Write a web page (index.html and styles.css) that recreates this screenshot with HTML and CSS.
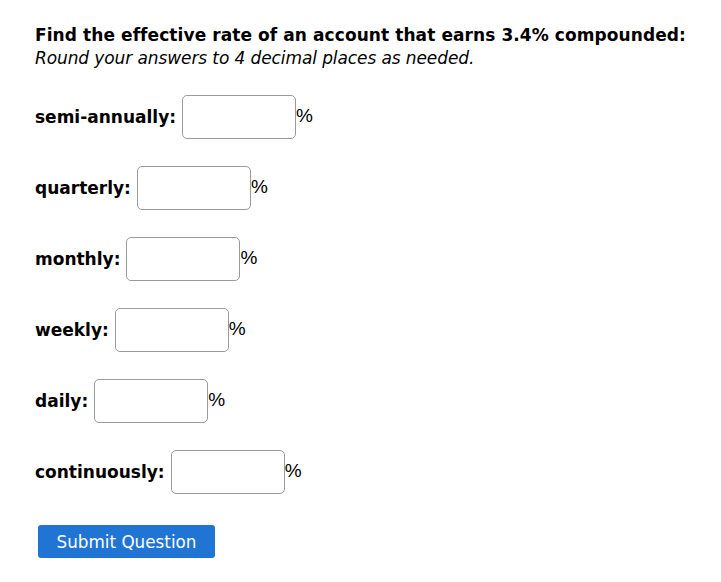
FILE: index.html
```html
<!DOCTYPE html>
<html>
<head>
<meta charset="utf-8">
<link rel="stylesheet" href="styles.css">
</head>
<body>
<div class="question">
  <p class="prompt"><strong class="title">Find the effective rate of an account that earns 3.4% compounded:</strong><br><em class="note">Round your answers to 4 decimal places as needed.</em></p>
  <div class="answers">
    <div class="row"><span class="label">semi-annually:</span><input class="box" type="text"><span class="pct">%</span></div>
    <div class="row"><span class="label">quarterly:</span><input class="box" type="text"><span class="pct">%</span></div>
    <div class="row"><span class="label">monthly:</span><input class="box" type="text"><span class="pct">%</span></div>
    <div class="row"><span class="label">weekly:</span><input class="box" type="text"><span class="pct">%</span></div>
    <div class="row"><span class="label">daily:</span><input class="box" type="text"><span class="pct">%</span></div>
    <div class="row"><span class="label">continuously:</span><input class="box" type="text"><span class="pct">%</span></div>
  </div>
  <button class="submit" type="button">Submit Question</button>
</div>
</body>
</html>
```
FILE: styles.css
```css
html, body {
  margin: 0;
  padding: 0;
  background: #ffffff;
}
body {
  font-family: "DejaVu Sans", Verdana, sans-serif;
  color: #000;
}
.question {
  padding: 24px 0 0 35px;
}
.prompt {
  margin: 0;
  font-size: 17px;
  line-height: 23px;
}
.title {
  font-weight: bold;
  letter-spacing: 0.08px;
}
.note {
  font-style: italic;
  letter-spacing: -0.1px;
}
.answers {
  display: flex;
  flex-direction: column;
  gap: 27px;
  margin-top: 25px;
}
.row {
  display: flex;
  align-items: center;
  height: 44px;
}
.label {
  font-weight: bold;
  font-size: 17px;
  margin-right: 6px;
}
.box {
  box-sizing: border-box;
  width: 114px;
  height: 44px;
  border: 1px solid #9a9a9a;
  border-radius: 5px;
  margin: 0;
  padding: 0;
  background: #fff;
}
.pct {
  font-family: "Liberation Sans", Arial, sans-serif;
  font-size: 19px;
  align-self: flex-start;
  margin-top: 10px;
}
.submit {
  margin: 31px 0 0 3px;
  width: 177px;
  height: 33px;
  background: #1f74d4;
  color: #fff;
  border: none;
  border-radius: 3px;
  font-family: "DejaVu Sans", Verdana, sans-serif;
  font-size: 16.8px;
  padding: 0;
}
```
